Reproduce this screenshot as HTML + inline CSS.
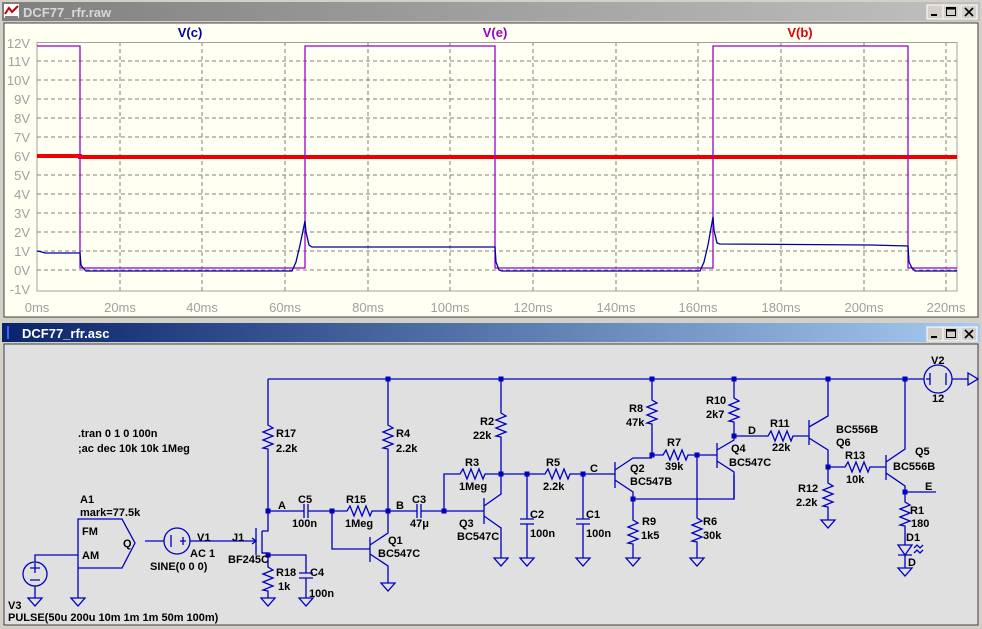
<!DOCTYPE html>
<html><head><meta charset="utf-8"><style>
html,body{margin:0;padding:0;width:982px;height:629px;overflow:hidden;background:#d4d0c8;}
svg{position:absolute;left:0;top:0}
</style></head><body>
<svg width="982" height="629" viewBox="0 0 982 629" xmlns="http://www.w3.org/2000/svg">
<defs>
<linearGradient id="gi" x1="0" x2="1"><stop offset="0" stop-color="#808080"/><stop offset="1" stop-color="#c0c0c0"/></linearGradient>
<linearGradient id="ga" x1="0" x2="1"><stop offset="0" stop-color="#0a246a"/><stop offset="1" stop-color="#a6caf0"/></linearGradient>
</defs>
<!-- top window -->
<rect x="0" y="0" width="982" height="320" fill="#d4d0c8"/>
<rect x="2" y="2" width="978" height="19" fill="url(#gi)"/>
<rect x="4" y="4" width="15" height="14" fill="#fff"/>
<path d="M5 14 L9 8 L12 12 L18 6" stroke="#c00000" stroke-width="2" fill="none"/>
<path d="M5 17 H18" stroke="#000"/>
<text x="23" y="17" font-family="Liberation Sans,sans-serif" font-weight="bold" font-size="13" fill="#d8d8d8">DCF77_rfr.raw</text>
<g font-family="Liberation Sans,sans-serif" font-weight="bold" font-size="12">
<rect x="927" y="5" width="16" height="14" fill="#d4d0c8" stroke="#fff"/><path d="M931 15h6" stroke="#000" stroke-width="2"/>
<rect x="943" y="5" width="16" height="14" fill="#d4d0c8" stroke="#fff"/><rect x="946.5" y="7.5" width="9" height="8" fill="none" stroke="#000"/><path d="M946 8.5h10" stroke="#000" stroke-width="2"/>
<rect x="961" y="5" width="16" height="14" fill="#d4d0c8" stroke="#fff"/><path d="M965 8l8 8M973 8l-8 8" stroke="#000" stroke-width="1.6"/>
</g>
<rect x="4" y="23" width="974" height="294" fill="#fffff2" stroke="#404040"/>
<!-- grid -->
<g stroke="#808080" stroke-dasharray="4,3" stroke-width="1">
<path d="M37 61H957M37 80H957M37 99H957M37 118H957M37 137H957M37 156H957M37 175H957M37 194H957M37 213H957M37 232H957M37 251H957M37 270H957"/>
<path d="M120 42V291M202 42V291M285 42V291M368 42V291M450 42V291M533 42V291M616 42V291M698 42V291M781 42V291M864 42V291M946 42V291"/>
</g>
<rect x="37" y="42.5" width="920" height="248.5" fill="none" stroke="#a0a0a0"/>
<g font-family="Liberation Sans,sans-serif" font-size="13" fill="#a0a0a0" text-anchor="end">
<text x="30" y="48">12V</text><text x="30" y="66">11V</text><text x="30" y="85">10V</text><text x="30" y="104">9V</text><text x="30" y="123">8V</text><text x="30" y="142">7V</text><text x="30" y="161">6V</text><text x="30" y="180">5V</text><text x="30" y="199">4V</text><text x="30" y="218">3V</text><text x="30" y="237">2V</text><text x="30" y="256">1V</text><text x="30" y="275">0V</text><text x="30" y="294">-1V</text>
</g>
<g font-family="Liberation Sans,sans-serif" font-size="13" fill="#a0a0a0" text-anchor="middle">
<text x="37" y="312">0ms</text><text x="120" y="312">20ms</text><text x="202" y="312">40ms</text><text x="285" y="312">60ms</text><text x="368" y="312">80ms</text><text x="450" y="312">100ms</text><text x="533" y="312">120ms</text><text x="616" y="312">140ms</text><text x="698" y="312">160ms</text><text x="781" y="312">180ms</text><text x="864" y="312">200ms</text><text x="946" y="312">220ms</text>
</g>
<g font-family="Liberation Sans,sans-serif" font-weight="bold" font-size="13" text-anchor="middle">
<text x="190" y="37" fill="#0000a0">V(c)</text><text x="495" y="37" fill="#9900bb">V(e)</text><text x="800" y="37" fill="#dd0000">V(b)</text>
</g>
<path d="M37 156H80V157H957" stroke="#ee0000" stroke-width="4" fill="none"/>
<path d="M37 46H80V268H305V46H495V268H713V46H908V268H957" stroke="#9900cc" stroke-width="1.3" fill="none"/>
<path d="M37 251L42 252L45 253L80 253L81 265L83 268L86 271L292 271L296 262L300 245L305 221L306 232L309 245L312 247L495 247L496 262L499 270L502 271L700 271L704 262L708 245L713 217L714 230L717 243L720 244L870 245L908 246L909 262L912 268L915 271L957 271" stroke="#0000a0" stroke-width="1.3" fill="none"/>

<!-- bottom window -->
<rect x="2" y="323" width="978" height="19" fill="url(#ga)"/>
<path d="M8 326V339" stroke="#4060ff" stroke-width="2"/>
<text x="22" y="338" font-family="Liberation Sans,sans-serif" font-weight="bold" font-size="13" fill="#fff">DCF77_rfr.asc</text>
<rect x="927" y="327" width="16" height="14" fill="#d4d0c8" stroke="#fff"/><path d="M931 337h6" stroke="#000" stroke-width="2"/>
<rect x="943" y="327" width="16" height="14" fill="#d4d0c8" stroke="#fff"/><rect x="946.5" y="329.5" width="9" height="8" fill="none" stroke="#000"/><path d="M946 330.5h10" stroke="#000" stroke-width="2"/>
<rect x="961" y="327" width="16" height="14" fill="#d4d0c8" stroke="#fff"/><path d="M965 330l8 8M973 330l-8 8" stroke="#000" stroke-width="1.6"/>
<rect x="4" y="344" width="974" height="281" fill="#e0e0e0" stroke="#404040"/>

<g stroke="#0000c0" stroke-width="1.3" fill="none">
<!-- rail -->
<path d="M268 379H924M952 379H968"/>
<path d="M968 373V385L978 379Z"/>
<circle cx="938" cy="379" r="14"/><path d="M930 373V385M946 373V385M926 379H930"/>
<!-- R17 / A / J1 -->
<path d="M268 379V425l5 3l-10 4l10 4l-10 4l10 4l-10 4l5 1V511"/>
<path d="M388 379V425l5 3l-10 4l10 4l-10 4l10 4l-10 4l5 1V511"/>
<path d="M268 511H304M308 511H332H347l3-5l4 10l4-10l4 10l4-10l4 10l2-5H417M421 511H444"/>
<path d="M304 504V518M308 504V518M417 504V518M421 504V518"/>
<path d="M268 511V531H262M256 528V555M262 531V553H268V567l5 3l-10 4l10 4l-10 4l10 4l-10 4l5 1V598"/>
<path d="M262 553H268M268 555H306V573M299 573H313M299 578H313M306 578V598"/>
<path d="M145 541H164M190 541H256"/><circle cx="177" cy="541" r="13"/><path d="M171 535V547M183 537V545M180 541H186"/>
<path d="M252 538L256 541L252 544"/>
<!-- Q1 -->
<path d="M332 511V549H370M370 537V562M370 545L388 533V511M370 554L388 566V583"/>
<!-- A1 -->
<path d="M78 519H122L135 543L122 568H78ZM78 568V598M78 555H35V562"/><circle cx="35" cy="574" r="12"/><path d="M35 586V598M30 568H40M35 563V573M30 580H40"/>
<!-- grounds -->
<path d="M261 598H275L268 606ZM299 598H313L306 606ZM381 583H395L388 591ZM71 598H85L78 606ZM28 598H42L35 606ZM494 558H508L501 566ZM520 558H534L527 566ZM576 558H590L583 566ZM626 558H640L633 566ZM690 558H704L697 566ZM821 520H835L828 528ZM898 568H912L905 576Z"/>
<!-- R2 R3 Q3 -->
<path d="M501 379V413l5 3l-10 4l10 4l-10 4l10 4l-10 4l5 1V474"/>
<path d="M444 511V474H460l3-5l4 10l4-10l4 10l4-10l4 10l2-5H501H545l3-5l4 10l4-10l4 10l4-10l4 10l2-5H615"/>
<path d="M444 511H484M484 498V524M484 506L501 494V474M484 516L501 528V558"/>
<path d="M527 474V519M520 519H534M520 524H534M527 524V558M583 474V519M576 519H590M576 524H590M583 524V558"/>
<!-- Q2 -->
<path d="M615 462V488M615 470L633 458H652M615 480L633 492V520l5 3l-10 4l10 4l-10 4l10 4l-10 4l5 1V558"/>
<path d="M633 499H734V475"/>
<path d="M652 379V400l5 3l-10 4l10 4l-10 4l10 4l-10 4l5 1V455H663l3-5l4 10l4-10l4 10l4-10l4 10l2-5H717"/>
<path d="M697 455V518l5 3l-10 4l10 4l-10 4l10 4l-10 4l5 1V558"/>
<!-- Q4 -->
<path d="M717 443V468M717 450L734 440V436M717 461L734 472V499"/>
<path d="M734 379V398l5 3l-10 4l10 4l-10 4l10 4l-10 4l5 1V436H768l3-5l4 10l4-10l4 10l4-10l4 10l2-5H809"/>
<!-- Q6 -->
<path d="M809 420V445M809 427L828 416V379M809 438L828 450V467H845l3-5l4 10l4-10l4 10l4-10l4 10l2-5H886"/>
<path d="M828 467V483l5 3l-10 4l10 4l-10 4l10 4l-10 4l5 1V520"/>
<!-- Q5 -->
<path d="M886 455V480M886 462L905 449V379M886 473L905 486V492H936"/>
<path d="M905 492V502l5 3l-10 4l10 4l-10 4l10 4l-10 4l5 1V545M898 545H912L905 555ZM898 555H912M905 555V568"/>
<path d="M914 548l3-3l3 3l3-3M914 553l3-3l3 3l3-3"/>
</g>
<g fill="#0000c0">
<rect x="385.5" y="376.5" width="5" height="5"/><rect x="498.5" y="376.5" width="5" height="5"/><rect x="649.5" y="376.5" width="5" height="5"/><rect x="731.5" y="376.5" width="5" height="5"/><rect x="825.5" y="376.5" width="5" height="5"/><rect x="902.5" y="376.5" width="5" height="5"/>
<rect x="265.5" y="508.5" width="5" height="5"/><rect x="329.5" y="508.5" width="5" height="5"/><rect x="385.5" y="508.5" width="5" height="5"/><rect x="441.5" y="508.5" width="5" height="5"/><rect x="265.5" y="552.5" width="5" height="5"/>
<rect x="498.5" y="471.5" width="5" height="5"/><rect x="524.5" y="471.5" width="5" height="5"/><rect x="580.5" y="471.5" width="5" height="5"/>
<rect x="649.5" y="452.5" width="5" height="5"/><rect x="694.5" y="452.5" width="5" height="5"/><rect x="630.5" y="496.5" width="5" height="5"/><rect x="731.5" y="433.5" width="5" height="5"/>
<rect x="825.5" y="464.5" width="5" height="5"/><rect x="902.5" y="489.5" width="5" height="5"/>
</g>
<g font-family="Liberation Sans,sans-serif" font-weight="bold" font-size="11" fill="#000">
<text x="78" y="437">.tran 0 1 0 100n</text><text x="78" y="452">;ac dec 10k 10k 1Meg</text>
<text x="80" y="503">A1</text><text x="80" y="516">mark=77.5k</text>
<text x="82" y="535">FM</text><text x="82" y="559">AM</text><text x="123" y="547">Q</text>
<text x="197" y="541">V1</text><text x="190" y="557">AC 1</text><text x="150" y="570">SINE(0 0 0)</text>
<text x="232" y="541">J1</text><text x="228" y="563">BF245C</text>
<text x="8" y="609">V3</text><text x="8" y="621">PULSE(50u 200u 10m 1m 1m 50m 100m)</text>
<text x="276" y="437">R17</text><text x="276" y="452">2.2k</text>
<text x="396" y="437">R4</text><text x="396" y="452">2.2k</text>
<text x="278" y="509">A</text><text x="298" y="503">C5</text><text x="292" y="527">100n</text>
<text x="346" y="503">R15</text><text x="345" y="527">1Meg</text>
<text x="396" y="509">B</text><text x="412" y="503">C3</text><text x="410" y="527">47μ</text>
<text x="388" y="544">Q1</text><text x="378" y="557">BC547C</text>
<text x="276" y="576">R18</text><text x="278" y="590">1k</text>
<text x="310" y="576">C4</text><text x="309" y="597">100n</text>
<text x="480" y="425">R2</text><text x="473" y="439">22k</text>
<text x="465" y="466">R3</text><text x="459" y="490">1Meg</text>
<text x="459" y="527">Q3</text><text x="457" y="540">BC547C</text>
<text x="530" y="518">C2</text><text x="530" y="537">100n</text>
<text x="546" y="466">R5</text><text x="543" y="490">2.2k</text>
<text x="590" y="472">C</text>
<text x="586" y="518">C1</text><text x="586" y="537">100n</text>
<text x="630" y="472">Q2</text><text x="630" y="485">BC547B</text>
<text x="629" y="412">R8</text><text x="626" y="426">47k</text>
<text x="667" y="446">R7</text><text x="665" y="470">39k</text>
<text x="642" y="525">R9</text><text x="641" y="539">1k5</text>
<text x="703" y="525">R6</text><text x="703" y="539">30k</text>
<text x="706" y="404">R10</text><text x="706" y="418">2k7</text>
<text x="731" y="452">Q4</text><text x="729" y="466">BC547C</text>
<text x="748" y="434">D</text>
<text x="770" y="427">R11</text><text x="772" y="451">22k</text>
<text x="836" y="433">BC556B</text><text x="836" y="446">Q6</text>
<text x="845" y="459">R13</text><text x="846" y="483">10k</text>
<text x="798" y="492">R12</text><text x="796" y="506">2.2k</text>
<text x="915" y="455">Q5</text><text x="893" y="470">BC556B</text>
<text x="925" y="490">E</text>
<text x="910" y="514">R1</text><text x="911" y="527">180</text>
<text x="906" y="541">D1</text><text x="908" y="566">D</text>
<text x="931" y="364">V2</text><text x="932" y="402">12</text>
</g>
</svg>
</body></html>
